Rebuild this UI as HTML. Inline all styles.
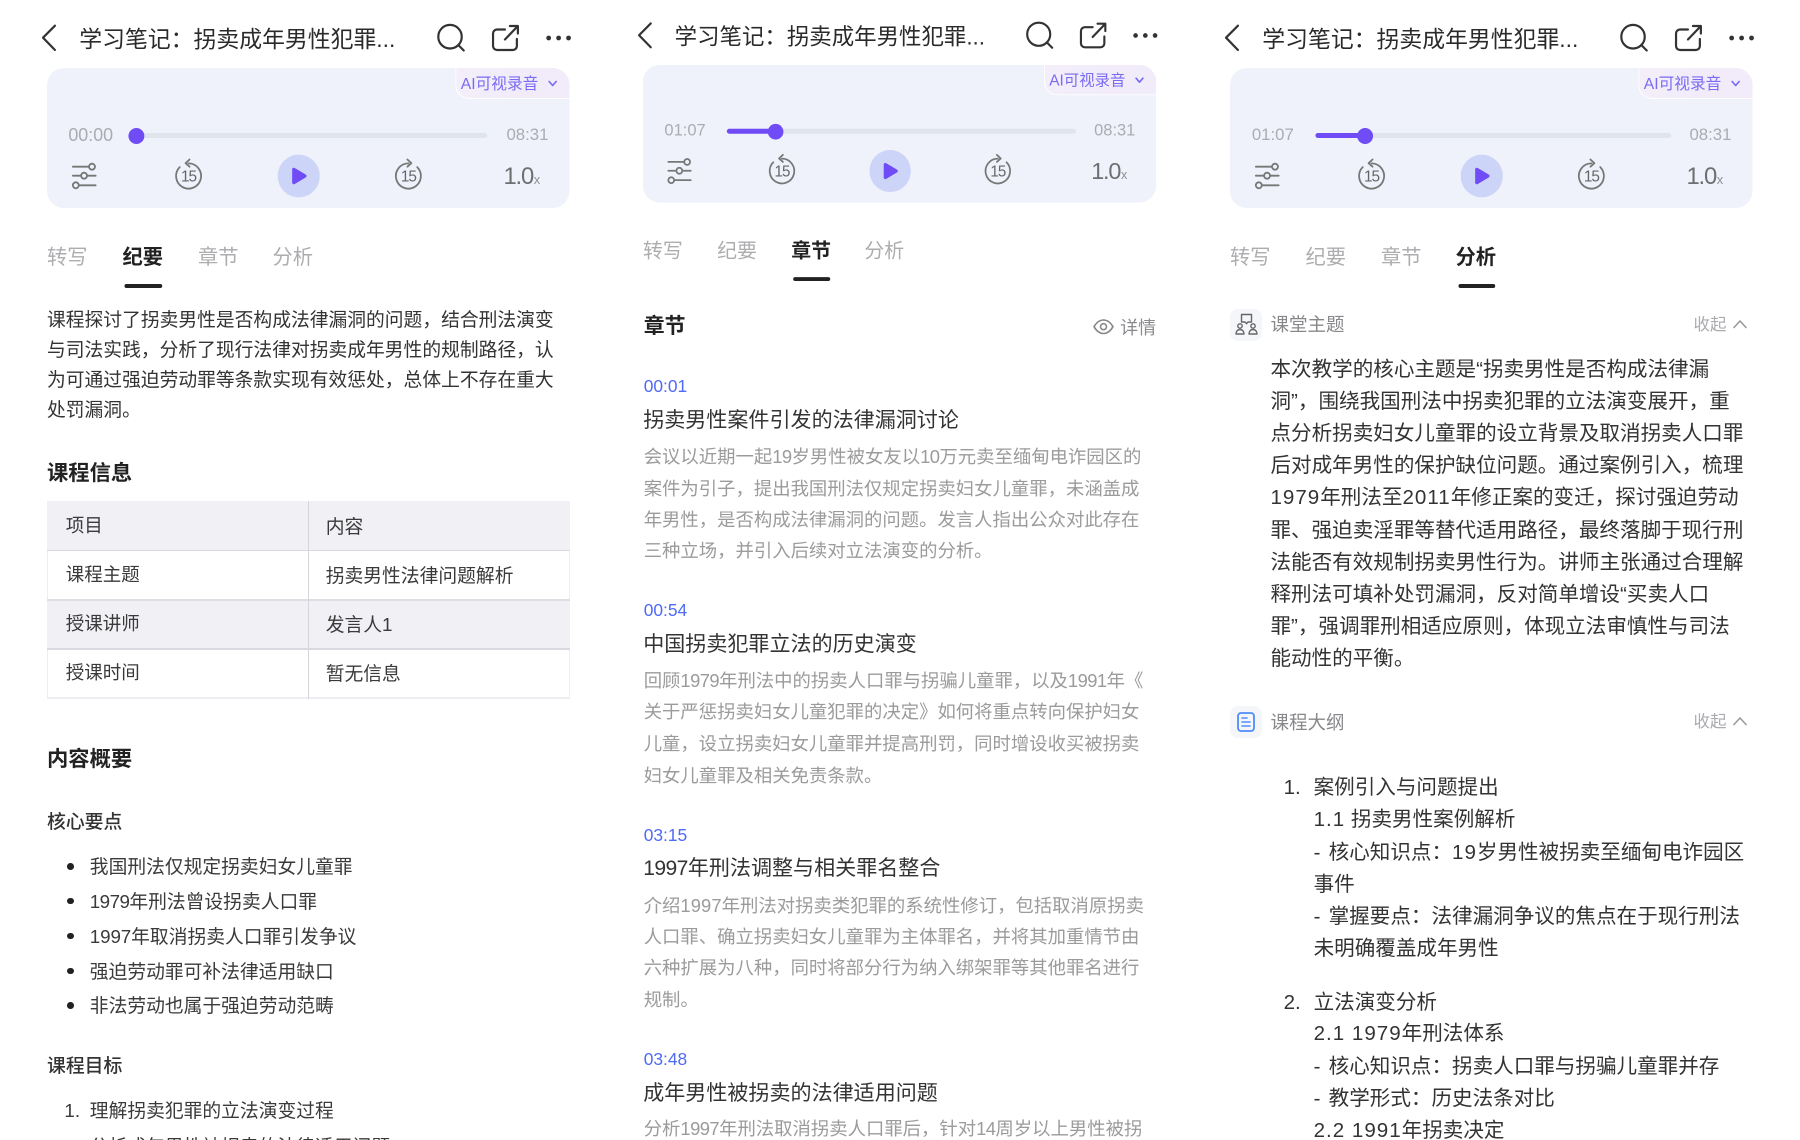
<!DOCTYPE html>
<html lang="zh-CN"><head><meta charset="utf-8"><title>学习笔记</title>
<style>
html,body{margin:0;padding:0;width:1800px;height:1140px;overflow:hidden;background:#fff}
body{position:relative;font-family:"Liberation Sans","Noto Sans CJK SC",sans-serif;color:#333;filter:blur(.3px)}
.t{position:absolute;white-space:nowrap;height:0;line-height:0;margin-top:1px}
.g{font-style:normal;letter-spacing:-.55px}
.h{position:absolute;left:0;top:0;width:620px;height:300px;transform-origin:0 0}
.h svg{position:absolute;left:0;top:0}
.card{position:absolute;left:47px;top:68px;width:526px;height:140px;border-radius:17px;background:#eff2fb;overflow:hidden}
.badge{position:absolute;right:0;top:0;width:114px;height:29.5px;background:linear-gradient(90deg,#f3eefa,#f1ebfa);border-left:1.5px solid #fff;border-bottom:1.5px solid #fff;border-bottom-left-radius:14px}
.title{font-size:23px;color:#2a2a2a;left:79.5px;top:38px}
.ai{font-size:15.8px;left:463.5px;top:84px;color:#7a6cf2}
.tm{font-size:16.9px;color:#a9acb3;top:135px;margin-top:0}
.sp{font-size:24px;color:#6f6f72;left:506.5px;top:176px;letter-spacing:-1.2px}
.x{font-size:13px;color:#909095;left:537px;top:179px}
.tab{font-size:20.4px;color:#adadb0;top:257px}
.on{color:#222;font-weight:700}
.ul{position:absolute;top:284px;height:4px;width:37.5px;border-radius:2px;background:#222}
.tr{position:absolute;top:133.2px;height:5px;border-radius:3px;background:#e0e4ed}
.fl{position:absolute;top:133.2px;height:5px;border-radius:3px;background:#6f4cf5}
.th{position:absolute;top:127.7px;width:16px;height:16px;border-radius:50%;background:#6f4cf5}
.b{font-size:18.77px;color:#333}
.hd{font-size:21.3px;font-weight:700;color:#222;left:47px}
.m{font-size:18.85px;color:#333;left:47px;font-weight:500}
.li{font-size:18.77px;color:#3a3a3a;left:89.8px}
.dot{position:absolute;left:67px;width:6.6px;height:6.6px;border-radius:50%;background:#222}
.cell{position:absolute;left:47px;width:522.5px}
.tc{font-size:18.5px;color:#3a3a3a}
.tr2{font-size:18.8px;color:#3a3a3a;left:325.7px}
.n{font-size:17.4px;color:#4f6af5;left:643.7px;margin-top:-.5px}
.ct{font-size:21.05px;color:#333;left:643.2px;margin-top:2px}
.d{font-size:18.38px;color:#9b9b9b;left:643.7px;margin-top:.5px}
.p{font-size:20.57px;color:#333;left:1270.5px;margin-top:1px}
.q{font-size:20.57px;color:#333;left:1313.6px;margin-top:1px}
.p .g,.q .g{letter-spacing:1px}
.w{word-spacing:2.5px}
.s{font-size:18.5px;color:#88888c;left:1270.5px}
.c{font-size:16.5px;color:#ababb0;left:1693.5px}
.tile{position:absolute;left:1230px;width:32px;height:32px;border-radius:8px;background:#f5f6fa}
</style></head><body>

<!-- PANEL 1 -->
<div class="h" style="transform:translateX(.31px) scaleX(.9934)">
<div class="card"><div class="badge"></div></div>
<div class="tr" style="left:129px;width:361px"></div>
<div class="th" style="left:129px"></div>
<svg width="620" height="300" fill="none" stroke-linecap="round" stroke-linejoin="round">
<path d="M55 25.7L43 37.7L55 50" stroke="#333" stroke-width="2.2"/>
<circle cx="452.7" cy="36.7" r="11.8" stroke="#333" stroke-width="2.2"/><path d="M461 45L466.5 50.5" stroke="#333" stroke-width="2.2"/>
<path d="M508 29.5H500a4 4 0 0 0-4 4V46a4 4 0 0 0 4 4H516a4 4 0 0 0 4-4V39" stroke="#333" stroke-width="2.2"/><path d="M508 39.5L520.5 26.5M513 26H521V33.5" stroke="#333" stroke-width="2.2"/>
<g fill="#333"><circle cx="552" cy="38" r="2.4"/><circle cx="562" cy="38" r="2.4"/><circle cx="572" cy="38" r="2.4"/></g>
<path d="M552.5 81.5L556 85.5L559.5 81.5" stroke="#7a6cf2" stroke-width="1.7"/>
<g stroke="#777" stroke-width="1.8"><path d="M73 166.7H89M73 175.7H81M87.5 175.7H96M79 185.3H96"/><circle cx="92.3" cy="166.7" r="3"/><circle cx="84.3" cy="175.7" r="3"/><circle cx="76" cy="185.3" r="3"/></g>
<g stroke="#777" stroke-width="1.8"><path d="M189.5 163.4A12.6 12.6 0 1 1 180.6 167.1"/><path d="M190.5 159.5L186.5 163.2L190.5 166.7"/></g>
<text x="189.5" y="181.5" font-size="15.5" fill="#666" text-anchor="middle" letter-spacing="-1" font-family="Liberation Sans">15</text>
<g stroke="#777" stroke-width="1.8"><path d="M410.8 163.4A12.6 12.6 0 1 0 419.7 167.1"/><path d="M409.8 159.5L413.8 163.2L409.8 166.7"/></g>
<text x="410.8" y="181.5" font-size="15.5" fill="#666" text-anchor="middle" letter-spacing="-1" font-family="Liberation Sans">15</text>
<ellipse cx="300.4" cy="176" rx="21.2" ry="21.4" fill="#ccd4f7"/>
<path d="M295.5 169.5L306.5 176L295.500 182.5Z" fill="#6f4cf5" stroke="#6f4cf5" stroke-width="3.4"/>
</svg>
<div class="t title">学习笔记：拐卖成年男性犯罪...</div>
<div class="t ai">AI可视录音</div>
<div class="t tm" style="left:68.5px;font-size:18px">00:00</div><div class="t tm" style="left:509.5px">08:31</div>
<div class="t sp">1.0</div><div class="t x">x</div>
<div class="t tab" style="left:47px">转写</div><div class="t tab on" style="left:123px">纪要</div><div class="t tab" style="left:199px">章节</div><div class="t tab" style="left:274px">分析</div>
<div class="ul" style="left:125.4px"></div>
</div>

<div class="t b" style="left:47px;top:319px">课程探讨了拐卖男性是否构成法律漏洞的问题，结合刑法演变</div>
<div class="t b" style="left:47px;top:349px">与司法实践，分析了现行法律对拐卖成年男性的规制路径，认</div>
<div class="t b" style="left:47px;top:379px">为可通过强迫劳动罪等条款实现有效惩处，总体上不存在重大</div>
<div class="t b" style="left:47px;top:408.5px">处罚漏洞。</div>
<div class="t hd" style="top:472px">课程信息</div>

<div class="cell" style="top:501px;height:197.5px;background:#fff;box-shadow:inset 0 0 0 1px #eeeef2"></div>
<div class="cell" style="top:501px;height:49.3px;background:#f0f0f5"></div>
<div class="cell" style="top:599.7px;height:49.3px;background:#f0f0f5"></div>
<div class="cell" style="top:549.6px;height:1.4px;background:#d9dae0"></div>
<div class="cell" style="top:599px;height:1.6px;background:#dddee4"></div>
<div class="cell" style="top:648.4px;height:1.4px;background:#d9dae0"></div>
<div class="cell" style="top:697.4px;height:1.2px;background:#eeeef2"></div>
<div style="position:absolute;left:307.5px;top:501px;width:1.2px;height:197.5px;background:#d5d6dc"></div>
<div class="t tc" style="left:65.8px;top:525px">项目</div><div class="t tr2" style="top:525.7px">内容</div>
<div class="t tc" style="left:65.8px;top:574px">课程主题</div><div class="t tr2" style="top:574.9px">拐卖男性法律问题解析</div>
<div class="t tc" style="left:65.8px;top:623px">授课讲师</div><div class="t tr2" style="top:624px">发言人<i class="g">1</i></div>
<div class="t tc" style="left:65.8px;top:672px">授课时间</div><div class="t tr2" style="top:673.3px">暂无信息</div>

<div class="t hd" style="top:758px">内容概要</div>
<div class="t m" style="top:820.5px">核心要点</div>
<div class="dot" style="top:863.2px"></div><div class="t li" style="top:866px">我国刑法仅规定拐卖妇女儿童罪</div>
<div class="dot" style="top:897.7px"></div><div class="t li" style="top:900.5px"><i class="g">1979</i>年刑法曾设拐卖人口罪</div>
<div class="dot" style="top:932.7px"></div><div class="t li" style="top:935.5px"><i class="g" style="letter-spacing:-.1px">1997</i>年取消拐卖人口罪引发争议</div>
<div class="dot" style="top:967.7px"></div><div class="t li" style="top:970.5px">强迫劳动罪可补法律适用缺口</div>
<div class="dot" style="top:1002.2px"></div><div class="t li" style="top:1005px">非法劳动也属于强迫劳动范畴</div>
<div class="t m" style="top:1064.5px">课程目标</div>
<div class="t li" style="left:64.4px;top:1110px">1.</div><div class="t li" style="top:1110px">理解拐卖犯罪的立法演变过程</div>
<div class="t li" style="left:64.4px;top:1146px">2.</div><div class="t li" style="top:1146px">分析成年男性被拐卖的法律适用问题</div>

<!-- PANEL 2 -->
<div class="h" style="transform:translate(597.1px,-1.8px) scale(.9755,.982)">
<div class="card"><div class="badge"></div></div>
<div class="tr" style="left:133px;width:358px"></div>
<div class="fl" style="left:133px;width:50px"></div>
<div class="th" style="left:175px"></div>
<svg width="620" height="300" fill="none" stroke-linecap="round" stroke-linejoin="round">
<path d="M55 25.7L43 37.7L55 50" stroke="#333" stroke-width="2.2"/>
<circle cx="452.7" cy="36.7" r="11.8" stroke="#333" stroke-width="2.2"/><path d="M461 45L466.5 50.5" stroke="#333" stroke-width="2.2"/>
<path d="M508 29.5H500a4 4 0 0 0-4 4V46a4 4 0 0 0 4 4H516a4 4 0 0 0 4-4V39" stroke="#333" stroke-width="2.2"/><path d="M508 39.5L520.5 26.5M513 26H521V33.5" stroke="#333" stroke-width="2.2"/>
<g fill="#333"><circle cx="552" cy="38" r="2.4"/><circle cx="562" cy="38" r="2.4"/><circle cx="572" cy="38" r="2.4"/></g>
<path d="M552.5 81.5L556 85.5L559.5 81.5" stroke="#7a6cf2" stroke-width="1.7"/>
<g stroke="#777" stroke-width="1.8"><path d="M73 166.7H89M73 175.7H81M87.5 175.7H96M79 185.3H96"/><circle cx="92.3" cy="166.7" r="3"/><circle cx="84.3" cy="175.7" r="3"/><circle cx="76" cy="185.3" r="3"/></g>
<g stroke="#777" stroke-width="1.8"><path d="M189.5 163.4A12.6 12.6 0 1 1 180.6 167.1"/><path d="M190.5 159.5L186.5 163.2L190.5 166.7"/></g>
<text x="189.5" y="181.5" font-size="15.5" fill="#666" text-anchor="middle" letter-spacing="-1" font-family="Liberation Sans">15</text>
<g stroke="#777" stroke-width="1.8"><path d="M410.8 163.4A12.6 12.6 0 1 0 419.7 167.1"/><path d="M409.8 159.5L413.8 163.2L409.8 166.7"/></g>
<text x="410.8" y="181.5" font-size="15.5" fill="#666" text-anchor="middle" letter-spacing="-1" font-family="Liberation Sans">15</text>
<ellipse cx="300.4" cy="176" rx="21.2" ry="21.4" fill="#ccd4f7"/>
<path d="M295.500 169.5L306.5 176L295.500 182.5Z" fill="#6f4cf5" stroke="#6f4cf5" stroke-width="3.4"/>
</svg>
<div class="t title">学习笔记：拐卖成年男性犯罪...</div>
<div class="t ai">AI可视录音</div>
<div class="t tm" style="left:69px">01:07</div><div class="t tm" style="left:509.5px">08:31</div>
<div class="t sp">1.0</div><div class="t x">x</div>
<div class="t tab" style="left:47px">转写</div><div class="t tab" style="left:123px">纪要</div><div class="t tab on" style="left:199px">章节</div><div class="t tab" style="left:274px">分析</div>
<div class="ul" style="left:201px"></div>
</div>

<div class="t hd" style="left:643.7px;top:325.7px;font-size:20.9px">章节</div>
<svg style="position:absolute;left:1091.5px;top:316px" width="24" height="22" fill="none" stroke="#888" stroke-width="1.6"><path d="M2 10.7C4.5 6.5 8 4 11.5 4S18.5 6.5 21 10.7C18.5 15 15 17.5 11.5 17.5S4.5 15 2 10.7Z"/><circle cx="11.5" cy="10.7" r="3"/></svg>
<div class="t" style="left:1120.1px;top:326.7px;font-size:18px;color:#8a8a8e">详情</div>

<div class="t n" style="top:386.7px">00:01</div>
<div class="t ct" style="top:419.3px">拐卖男性案件引发的法律漏洞讨论</div>
<div class="t d" style="top:456px">会议以近期一起<i class="g">19</i>岁男性被女友以<i class="g">10</i>万元卖至缅甸电诈园区的</div>
<div class="t d" style="top:488px">案件为引子，提出我国刑法仅规定拐卖妇女儿童罪，未涵盖成</div>
<div class="t d" style="top:519.3px">年男性，是否构成法律漏洞的问题。发言人指出公众对此存在</div>
<div class="t d" style="top:550.7px">三种立场，并引入后续对立法演变的分析。</div>

<div class="t n" style="top:610.7px">00:54</div>
<div class="t ct" style="top:643.3px">中国拐卖犯罪立法的历史演变</div>
<div class="t d" style="top:680px">回顾<i class="g">1979</i>年刑法中的拐卖人口罪与拐骗儿童罪，以及<i class="g">1991</i>年《</div>
<div class="t d" style="top:711.7px">关于严惩拐卖妇女儿童犯罪的决定》如何将重点转向保护妇女</div>
<div class="t d" style="top:743.3px">儿童，设立拐卖妇女儿童罪并提高刑罚，同时增设收买被拐卖</div>
<div class="t d" style="top:775px">妇女儿童罪及相关免责条款。</div>

<div class="t n" style="top:835px">03:15</div>
<div class="t ct" style="top:867.3px"><i class="g">1997</i>年刑法调整与相关罪名整合</div>
<div class="t d" style="top:905px">介绍<i class="g" style="letter-spacing:.1px">1997</i>年刑法对拐卖类犯罪的系统性修订，包括取消原拐卖</div>
<div class="t d" style="top:936px">人口罪、确立拐卖妇女儿童罪为主体罪名，并将其加重情节由</div>
<div class="t d" style="top:967.7px">六种扩展为八种，同时将部分行为纳入绑架罪等其他罪名进行</div>
<div class="t d" style="top:999.3px">规制。</div>

<div class="t n" style="top:1059px">03:48</div>
<div class="t ct" style="top:1092.3px">成年男性被拐卖的法律适用问题</div>
<div class="t d" style="top:1128.3px">分析<i class="g">1997</i>年刑法取消拐卖人口罪后，针对<i class="g">14</i>周岁以上男性被拐</div>

<!-- PANEL 3 -->
<div class="h" style="transform:translateX(1183.31px) scaleX(.9934)">
<div class="card"><div class="badge"></div></div>
<div class="tr" style="left:133px;width:358px"></div>
<div class="fl" style="left:133px;width:50px"></div>
<div class="th" style="left:175px"></div>
<svg width="620" height="300" fill="none" stroke-linecap="round" stroke-linejoin="round">
<path d="M55 25.7L43 37.7L55 50" stroke="#333" stroke-width="2.2"/>
<circle cx="452.7" cy="36.7" r="11.8" stroke="#333" stroke-width="2.2"/><path d="M461 45L466.5 50.5" stroke="#333" stroke-width="2.2"/>
<path d="M508 29.5H500a4 4 0 0 0-4 4V46a4 4 0 0 0 4 4H516a4 4 0 0 0 4-4V39" stroke="#333" stroke-width="2.2"/><path d="M508 39.5L520.5 26.5M513 26H521V33.5" stroke="#333" stroke-width="2.2"/>
<g fill="#333"><circle cx="552" cy="38" r="2.4"/><circle cx="562" cy="38" r="2.4"/><circle cx="572" cy="38" r="2.4"/></g>
<path d="M552.5 81.5L556 85.5L559.5 81.5" stroke="#7a6cf2" stroke-width="1.7"/>
<g stroke="#777" stroke-width="1.8"><path d="M73 166.7H89M73 175.7H81M87.5 175.7H96M79 185.3H96"/><circle cx="92.3" cy="166.7" r="3"/><circle cx="84.3" cy="175.7" r="3"/><circle cx="76" cy="185.3" r="3"/></g>
<g stroke="#777" stroke-width="1.8"><path d="M189.5 163.4A12.6 12.6 0 1 1 180.6 167.1"/><path d="M190.5 159.5L186.5 163.2L190.5 166.7"/></g>
<text x="189.5" y="181.5" font-size="15.5" fill="#666" text-anchor="middle" letter-spacing="-1" font-family="Liberation Sans">15</text>
<g stroke="#777" stroke-width="1.8"><path d="M410.8 163.4A12.6 12.6 0 1 0 419.7 167.1"/><path d="M409.8 159.5L413.8 163.2L409.8 166.7"/></g>
<text x="410.8" y="181.5" font-size="15.5" fill="#666" text-anchor="middle" letter-spacing="-1" font-family="Liberation Sans">15</text>
<ellipse cx="300.4" cy="176" rx="21.2" ry="21.4" fill="#ccd4f7"/>
<path d="M295.500 169.5L306.5 176L295.500 182.5Z" fill="#6f4cf5" stroke="#6f4cf5" stroke-width="3.4"/>
</svg>
<div class="t title">学习笔记：拐卖成年男性犯罪...</div>
<div class="t ai">AI可视录音</div>
<div class="t tm" style="left:69px">01:07</div><div class="t tm" style="left:509.5px">08:31</div>
<div class="t sp">1.0</div><div class="t x">x</div>
<div class="t tab" style="left:47px">转写</div><div class="t tab" style="left:123px">纪要</div><div class="t tab" style="left:199px">章节</div><div class="t tab on" style="left:274px">分析</div>
<div class="ul" style="left:276.5px"></div>
</div>

<div class="tile" style="top:308.5px"></div>
<svg style="position:absolute;left:1230px;top:308.5px" width="32" height="32" fill="none" stroke="#666" stroke-width="1.4" stroke-linejoin="round" stroke-linecap="round"><path d="M11.5 5.5H21.5V13H18L16.5 14.7L15 13H11.5Z"/><circle cx="10" cy="17" r="2.2"/><path d="M6 25C6 22.5 7.500 20.5 10 20.5S14 22.5 14 25Z"/><circle cx="23" cy="17" r="2.2"/><path d="M19 25C19 22.5 20.5 20.5 23 20.5S27 22.5 27 25Z"/></svg>
<div class="t s" style="top:324.2px">课堂主题</div>
<div class="t c" style="top:324px">收起</div>
<svg style="position:absolute;left:1730.5px;top:317px" width="18" height="14" fill="none" stroke="#9a9a9e" stroke-width="1.6" stroke-linecap="round" stroke-linejoin="round"><path d="M3 10.5L9 4L15 10.5"/></svg>

<div class="t p" style="top:368.5px">本次教学的核心主题是“拐卖男性是否构成法律漏</div>
<div class="t p" style="top:400.7px">洞”，围绕我国刑法中拐卖犯罪的立法演变展开，重</div>
<div class="t p" style="top:432.9px">点分析拐卖妇女儿童罪的设立背景及取消拐卖人口罪</div>
<div class="t p" style="top:465.1px">后对成年男性的保护缺位问题。通过案例引入，梳理</div>
<div class="t p" style="top:497.3px"><i class="g">1979</i>年刑法至<i class="g">2011</i>年修正案的变迁，探讨强迫劳动</div>
<div class="t p" style="top:529.5px">罪、强迫卖淫罪等替代适用路径，最终落脚于现行刑</div>
<div class="t p" style="top:561.7px">法能否有效规制拐卖男性行为。讲师主张通过合理解</div>
<div class="t p" style="top:593.9px">释刑法可填补处罚漏洞，反对简单增设“买卖人口</div>
<div class="t p" style="top:626.1px">罪”，强调罪刑相适应原则，体现立法审慎性与司法</div>
<div class="t p" style="top:658.3px">能动性的平衡。</div>

<div class="tile" style="top:706px"></div>
<svg style="position:absolute;left:1230px;top:706px" width="32" height="32" fill="none" stroke="#4d8dfb" stroke-width="1.8" stroke-linecap="round" stroke-linejoin="round"><rect x="8" y="7" width="16" height="18" rx="3"/><path d="M12 12H17M12 16H20M12 20H20" stroke-width="1.6"/></svg>
<div class="t s" style="top:722px">课程大纲</div>
<div class="t c" style="top:721px">收起</div>
<svg style="position:absolute;left:1730.5px;top:714px" width="18" height="14" fill="none" stroke="#9a9a9e" stroke-width="1.6" stroke-linecap="round" stroke-linejoin="round"><path d="M3 10.5L9 4L15 10.5"/></svg>

<div class="t q" style="left:1283.6px;top:787.3px">1.</div><div class="t q" style="top:787.3px">案例引入与问题提出</div>
<div class="t q" style="top:819px"><i class="g">1.1</i> 拐卖男性案例解析</div>
<div class="t q w" style="top:851.7px">- 核心知识点：<i class="g">19</i>岁男性被拐卖至缅甸电诈园区</div>
<div class="t q" style="top:884px">事件</div>
<div class="t q w" style="top:916px">- 掌握要点：法律漏洞争议的焦点在于现行刑法</div>
<div class="t q" style="top:948.3px">未明确覆盖成年男性</div>
<div class="t q" style="left:1283.6px;top:1001.7px">2.</div><div class="t q" style="top:1001.7px">立法演变分析</div>
<div class="t q" style="top:1033.3px"><i class="g">2.1 1979</i>年刑法体系</div>
<div class="t q w" style="top:1066px">- 核心知识点：拐卖人口罪与拐骗儿童罪并存</div>
<div class="t q w" style="top:1098.3px">- 教学形式：历史法条对比</div>
<div class="t q" style="top:1130px"><i class="g">2.2 1991</i>年拐卖决定</div>
</body></html>
